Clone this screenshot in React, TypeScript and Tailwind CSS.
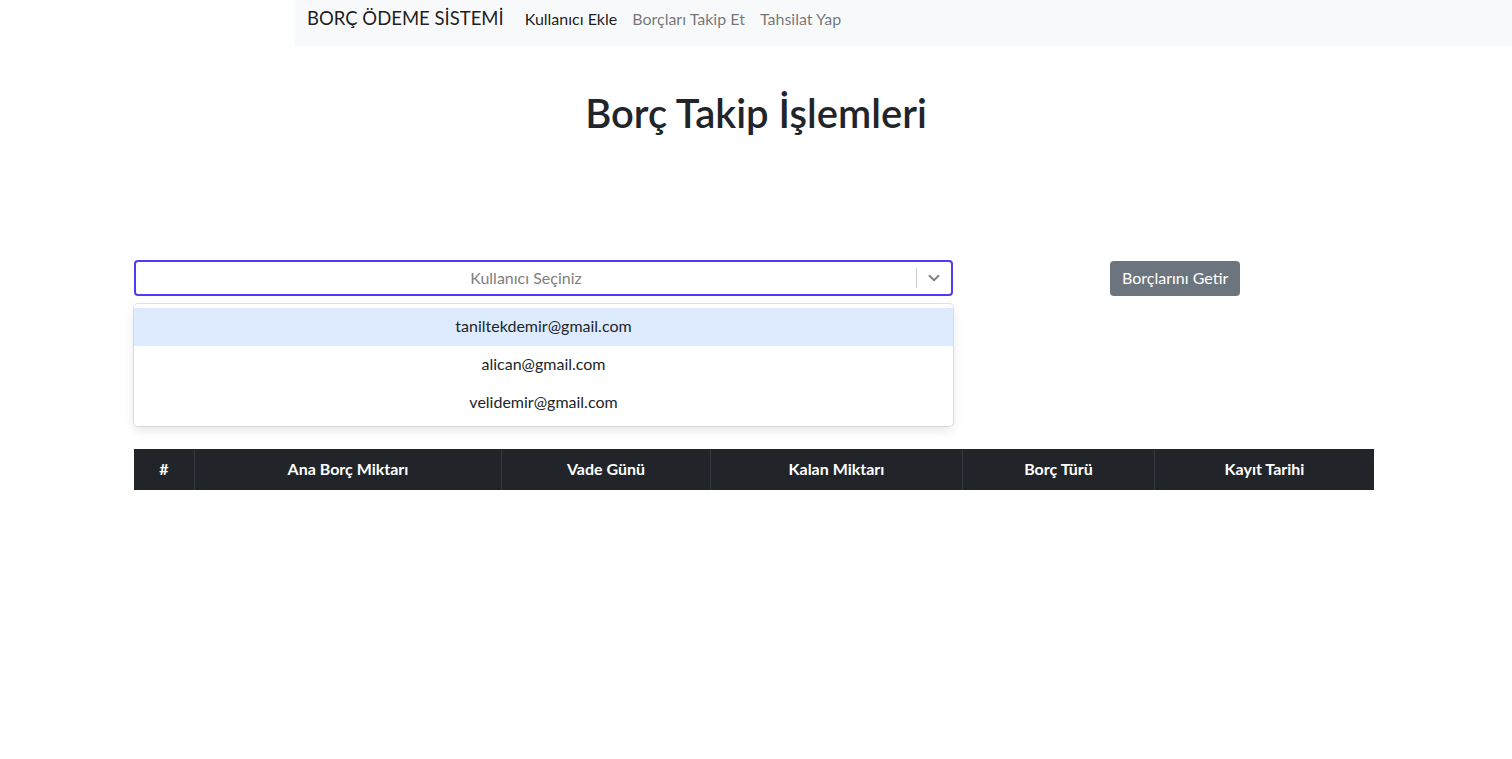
import { ChevronDown } from 'lucide-react';

const FONT = { fontFamily: '"Lato", "Noto Sans", "Liberation Sans", sans-serif' };

const USERS = ['taniltekdemir@gmail.com', 'alican@gmail.com', 'velidemir@gmail.com'];

const COLUMNS = [
  { label: '#', w: 'w-[60px]' },
  { label: 'Ana Borç Miktarı', w: 'w-[307px]' },
  { label: 'Vade Günü', w: 'w-[209px]' },
  { label: 'Kalan Miktarı', w: 'w-[252px]' },
  { label: 'Borç Türü', w: 'w-[192px]' },
  { label: 'Kayıt Tarihi', w: 'flex-1' },
];

export default function App() {
  return (
    <div className="min-h-[759px] bg-white text-[#212529]" style={FONT}>
      {/* navbar */}
      <nav className="ml-[295px] h-[46px] bg-[#f8f9fa] flex items-center pb-[8px] px-3">
        <span className="text-[18.5px] mr-[21px] text-black/90">BORÇ ÖDEME SİSTEMİ</span>
        <div className="flex gap-[15px] text-[16px]">
          <span className="text-black/90">Kullanıcı Ekle</span>
          <span className="text-black/55">Borçları Takip Et</span>
          <span className="text-black/55">Tahsilat Yap</span>
        </div>
      </nav>

      <h1 className="text-center text-[40px] font-semibold leading-tight mt-[42px]">Borç Takip İşlemleri</h1>

      <div className="mx-[134px] mt-[122px]">
        <div className="flex items-start">
          <div className="w-[819px] relative">
            <div className="h-[36px] border-2 border-[#4f3af5] rounded-[4px] flex items-center bg-white">
              <span className="flex-1 text-center text-[16px] text-[#808080]">Kullanıcı Seçiniz</span>
              <span className="w-px h-[20px] bg-[#cccccc]" />
              <span className="w-[34px] flex justify-center text-[#808080]">
                <ChevronDown size={18} strokeWidth={2.5} />
              </span>
            </div>
            <div className="mt-[8px] bg-white rounded-[4px] shadow-[0_0_0_1px_rgba(0,0,0,0.1),0_4px_11px_rgba(0,0,0,0.1)] py-[4px]">
              {USERS.map((u, i) => (
                <div
                  key={u}
                  className={`h-[38px] flex items-center justify-center text-[16px] pb-[2px] ${i === 0 ? 'bg-[#deebff]' : ''}`}
                >
                  {u}
                </div>
              ))}
            </div>
          </div>
          <button className="ml-[157px] mt-px h-[35px] px-3 pb-[2px] rounded-[4px] bg-[#6c757d] text-white text-[16px]">
            Borçlarını Getir
          </button>
        </div>

        <div className="w-[1240px] mt-[23px] h-[41px] bg-[#212529] flex text-white font-bold text-[16px]">
          {COLUMNS.map((c, i) => (
            <div
              key={c.label}
              className={`${c.w} flex items-center justify-center pb-[2px] ${i > 0 ? 'border-l border-[#32383e]' : ''}`}
            >
              {c.label}
            </div>
          ))}
        </div>
      </div>
    </div>
  );
}
